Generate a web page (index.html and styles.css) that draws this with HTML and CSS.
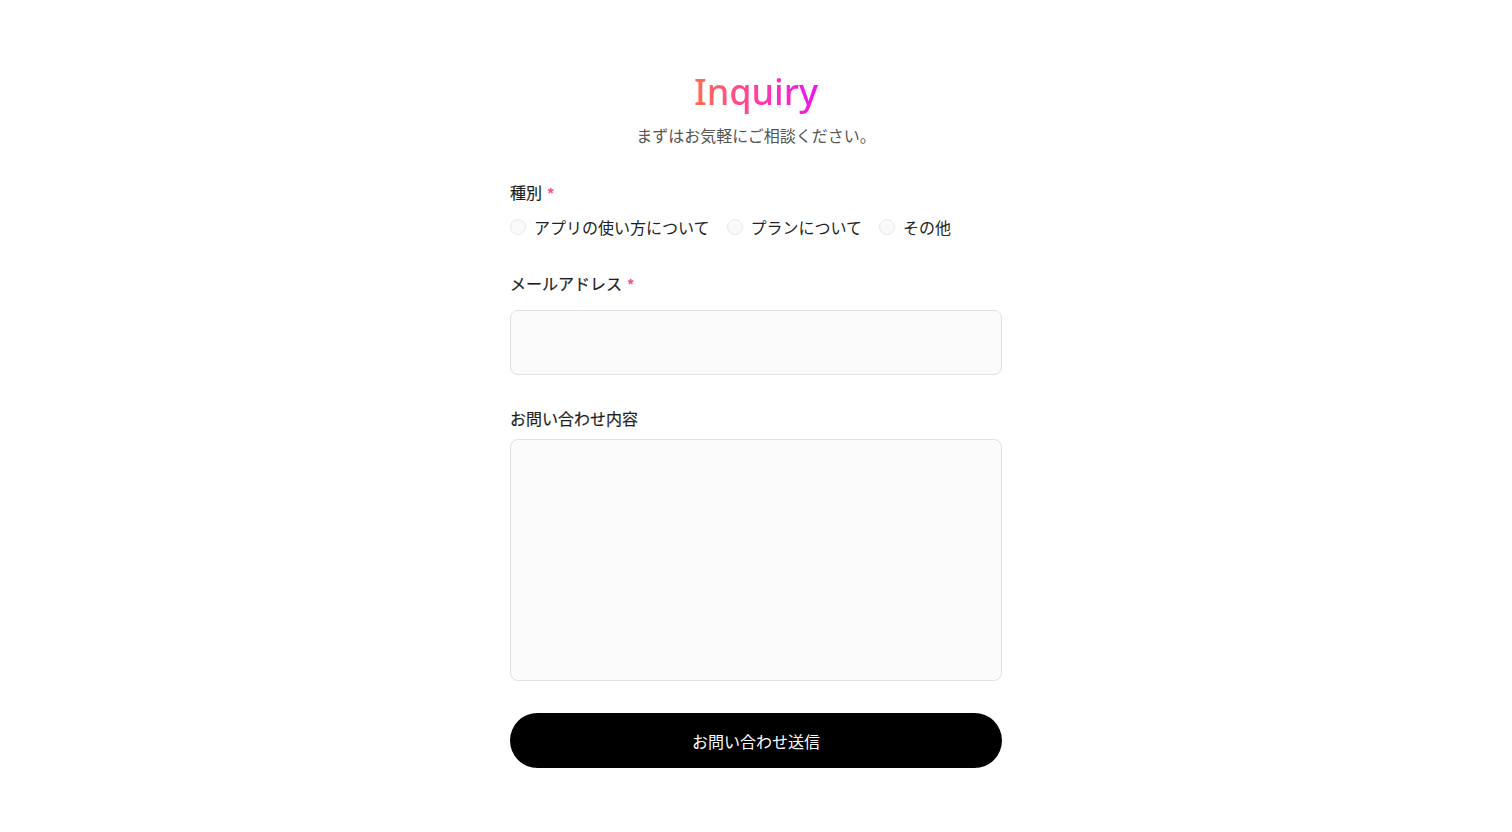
FILE: index.html
```html
<!DOCTYPE html>
<html lang="ja">
<head>
<meta charset="utf-8">
<title>Inquiry</title>
<link rel="stylesheet" href="styles.css">
</head>
<body>
<main class="page">
  <header class="head">
    <h1 class="title">Inquiry</h1>
    <p class="lead">まずはお気軽にご相談ください。</p>
  </header>
  <form class="form">
    <div class="field">
      <div class="label">種別<span class="req">*</span></div>
      <div class="radios">
        <label class="radio"><input type="radio" name="kind"><span>アプリの使い方について</span></label>
        <label class="radio"><input type="radio" name="kind"><span>プランについて</span></label>
        <label class="radio"><input type="radio" name="kind"><span>その他</span></label>
      </div>
    </div>
    <div class="field field-email">
      <label class="label" for="email">メールアドレス<span class="req">*</span></label>
      <input class="input" id="email" type="email">
    </div>
    <div class="field field-msg">
      <label class="label" for="msg">お問い合わせ内容</label>
      <textarea class="textarea" id="msg"></textarea>
    </div>
    <button class="submit" type="button">お問い合わせ送信</button>
  </form>
</main>
</body>
</html>
```
FILE: styles.css
```css
* { box-sizing: border-box; }
html, body { margin: 0; background: #fff; }
body {
  font-family: "Noto Sans CJK JP", "Noto Sans", sans-serif;
  color: #222;
}
.page {
  width: 492px;
  margin: 0 auto;
  padding-top: 69px;
  display: flex;
  flex-direction: column;
}
.head { text-align: center; }
.title {
  margin: 0;
  font-family: "Noto Sans", sans-serif;
  font-size: 36px;
  font-weight: 500;
  line-height: 46px;
  background: linear-gradient(90deg, #ff6e4f 0%, #ff3fa0 50%, #ec14ec 100%);
  -webkit-background-clip: text;
  background-clip: text;
  color: transparent;
  display: inline-block;
}
.lead {
  margin: 8px 0 0;
  font-size: 16px;
  line-height: 24px;
  color: #555;
}
.form {
  margin-top: 33px;
  display: flex;
  flex-direction: column;
}
.field { display: flex; flex-direction: column; }
.label {
  display: block;
  height: 24px;
  font-size: 16px;
  line-height: 24px;
  font-weight: 400;
  color: #1e1e1e;
  -webkit-text-stroke: 0.2px #1e1e1e;
}
.req {
  color: #f2508d;
  -webkit-text-stroke: 0.4px #f2508d;
  margin-left: 5px;
  font-size: 16px;
  line-height: 0;
  vertical-align: -2px;
}
.radios {
  margin-top: 11px;
  display: flex;
  gap: 17px;
}
.radio {
  display: flex;
  align-items: center;
  gap: 8px;
  font-size: 16px;
  line-height: 24px;
  color: #222;
}
.radio input {
  appearance: none;
  -webkit-appearance: none;
  margin: 0;
  width: 16px;
  height: 16px;
  border-radius: 50%;
  border: 1px solid #e8e8e8;
  background: #fafafa;
}
.field-email { margin-top: 32px; }
.field-email .input { margin-top: 15px; }
.input {
  width: 100%;
  height: 65px;
  border: 1px solid #e2e2e2;
  border-radius: 8px;
  background: #fbfbfb;
  font: inherit;
}
.field-msg { margin-top: 31px; }
.textarea {
  margin-top: 9px;
  width: 100%;
  height: 242px;
  border: 1px solid #e2e2e2;
  border-radius: 8px;
  background: #fbfbfb;
  resize: none;
  font: inherit;
  display: block;
}
.submit {
  margin-top: 32px;
  width: 100%;
  height: 55px;
  border: none;
  border-radius: 28px;
  background: #000;
  color: #fff;
  font-family: inherit;
  font-size: 16px;
  font-weight: 400;
}
```
